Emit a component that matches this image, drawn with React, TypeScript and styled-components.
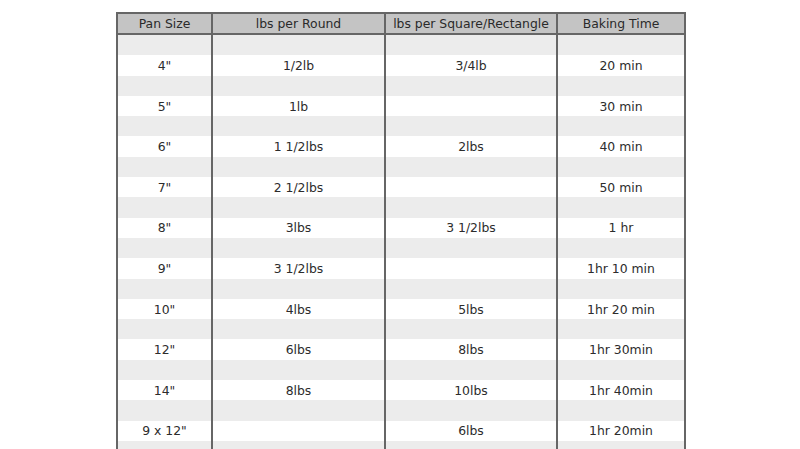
import React from "react";
import styled, { createGlobalStyle } from "styled-components";

const Global = createGlobalStyle`
  html, body { margin: 0; padding: 0; background: #ffffff; overflow: hidden; }
  body { font-family: "DejaVu Sans", Verdana, sans-serif; }
`;

const Page = styled.div`
  width: 800px;
  height: 449px;
  padding: 12px 0 0 116px;
  box-sizing: border-box;
  overflow: hidden;
`;

const Table = styled.table`
  border-collapse: collapse;
  table-layout: fixed;
  width: 568px;
  font-size: 12.4px;
  color: #2c2c2c;
`;

const Th = styled.th`
  height: 19px;
  padding: 0;
  background: #c4c4c4;
  border: 2px solid #666666;
  font-weight: normal;
  text-align: center;
  color: #2a2a2a;
  white-space: nowrap;
`;

const Tr = styled.tr<{ $shade: boolean }>`
  background: ${(p) => (p.$shade ? "#ececec" : "#ffffff")};
`;

const Td = styled.td`
  height: 20.3px;
  padding: 0;
  border-left: 2px solid #666666;
  border-right: 2px solid #666666;
  text-align: center;
  white-space: nowrap;
`;

const rows: [string, string, string, string][] = [
  ['4"', "1/2lb", "3/4lb", "20 min"],
  ['5"', "1lb", "", "30 min"],
  ['6"', "1 1/2lbs", "2lbs", "40 min"],
  ['7"', "2 1/2lbs", "", "50 min"],
  ['8"', "3lbs", "3 1/2lbs", "1 hr"],
  ['9"', "3 1/2lbs", "", "1hr 10 min"],
  ['10"', "4lbs", "5lbs", "1hr 20 min"],
  ['12"', "6lbs", "8lbs", "1hr 30min"],
  ['14"', "8lbs", "10lbs", "1hr 40min"],
  ['9 x 12"', "", "6lbs", "1hr 20min"],
];

export default function App() {
  return (
    <Page>
      <Global />
      <Table>
        <colgroup>
          <col style={{ width: 95 }} />
          <col style={{ width: 173 }} />
          <col style={{ width: 172 }} />
          <col style={{ width: 128 }} />
        </colgroup>
        <thead>
          <tr>
            <Th>Pan Size</Th>
            <Th>lbs per Round</Th>
            <Th>lbs per Square/Rectangle</Th>
            <Th>Baking Time</Th>
          </tr>
        </thead>
        <tbody>
          {rows.map((r, i) => (
            <React.Fragment key={i}>
              <Tr $shade>
                <Td />
                <Td />
                <Td />
                <Td />
              </Tr>
              <Tr $shade={false}>
                {r.map((c, j) => (
                  <Td key={j}>{c}</Td>
                ))}
              </Tr>
            </React.Fragment>
          ))}
          <Tr $shade>
            <Td />
            <Td />
            <Td />
            <Td />
          </Tr>
        </tbody>
      </Table>
    </Page>
  );
}
